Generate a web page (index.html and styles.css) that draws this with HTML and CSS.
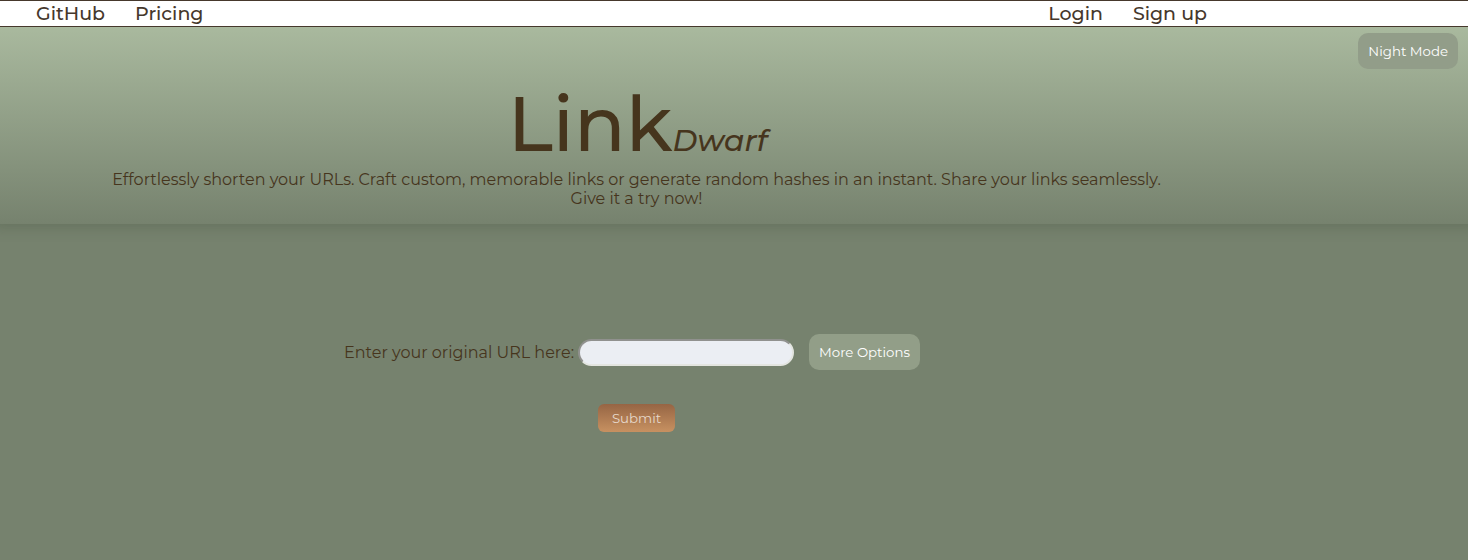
FILE: index.html
```html
<!DOCTYPE html>
<html lang="en">
<head>
<meta charset="utf-8">
<meta name="viewport" content="width=device-width, initial-scale=1">
<title>LinkDwarf</title>
<link rel="stylesheet" href="styles.css">
</head>
<body>
<nav class="navbar">
  <div class="nav-group">
    <a class="nav-link" href="#github">GitHub</a>
    <a class="nav-link" href="#pricing">Pricing</a>
  </div>
  <div class="nav-group">
    <a class="nav-link" href="#login">Login</a>
    <a class="nav-link" href="#signup">Sign up</a>
  </div>
</nav>
<header class="hero">
  <div class="hero-content">
    <h1 class="brand">Link<em class="brand-sub">Dwarf</em></h1>
    <p class="tagline">Effortlessly shorten your URLs. Craft custom, memorable links or generate random hashes in an instant. Share your links seamlessly.<br>Give it a try now!</p>
  </div>
  <button class="soft-button mode-button" type="button">Night Mode</button>
</header>
<main class="content">
  <form class="shorten-form">
    <div class="url-row">
      <label class="url-label" for="url">Enter your original URL here:</label>
      <input class="url-input" id="url" type="text">
      <button class="soft-button" type="button">More Options</button>
    </div>
    <button class="submit-button" type="submit">Submit</button>
  </form>
</main>
</body>
</html>
```
FILE: styles.css
```css
* {
  box-sizing: border-box;
}

body {
  margin: 0;
  min-height: 100vh;
  background: #76826e;
  color: #46351d;
  font-family: Montserrat, Inter, sans-serif;
  font-size: 16px;
  line-height: 19px;
}

button,
input {
  font-family: inherit;
}

.navbar {
  position: relative;
  z-index: 1;
  display: flex;
  justify-content: space-between;
  padding: 0 261px 0 36px;
  background: #fff;
  border-top: 1px solid #46382c;
  border-bottom: 1px solid #46382c;
}

.nav-group {
  display: flex;
  gap: 30px;
}

.nav-link {
  color: #46382c;
  font-size: 19px;
  font-weight: 500;
  line-height: 25px;
  text-decoration: none;
}

.hero {
  position: relative;
  padding: 50px 195px 16px 0;
  background: linear-gradient(#a9b99e, #76826e);
  box-shadow: 0 -4px 12px 8px rgba(70, 84, 62, 0.3);
  text-align: center;
}

.brand {
  margin: 0;
  padding-left: 2px;
  font-size: 76px;
  font-weight: 500;
  line-height: 93px;
}

.brand-sub {
  font-size: 30px;
  font-weight: 500;
  line-height: 1;
}

.tagline {
  margin: 0;
}

.soft-button {
  padding: 8px 10px;
  border: 0;
  border-radius: 10px;
  background: #929e88;
  color: #fff;
  line-height: 20px;
}

.mode-button {
  position: absolute;
  top: 6px;
  right: 10px;
  background: #929d89;
}

.shorten-form {
  display: flex;
  flex-direction: column;
  align-items: center;
  gap: 34px;
  padding: 110px 204px 0 0;
}

.url-row {
  display: flex;
  align-items: center;
}

.url-label {
  margin-right: 4px;
}

.url-input {
  width: 216px;
  height: 27px;
  margin-right: 15px;
  padding: 0 10px;
  border: 2px inset #e3e5e0;
  border-radius: 14px;
  background: #ebeef3;
}

.submit-button {
  margin-left: 9px;
  padding: 4px 14px;
  border: 0;
  border-radius: 6px;
  background: linear-gradient(#966544, #c79161);
  color: #e6d8ca;
  line-height: 20px;
}
```
